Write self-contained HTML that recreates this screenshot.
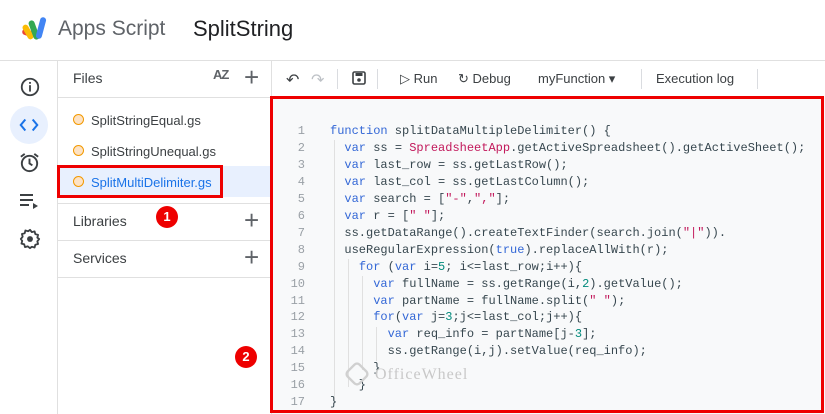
<!DOCTYPE html>
<html><head><meta charset="utf-8"><style>
*{margin:0;padding:0;box-sizing:border-box}
body{width:825px;height:414px;overflow:hidden;background:#fff;font-family:"Liberation Sans",sans-serif;position:relative;color:#3c4043}
.a{position:absolute}
.code{font-family:"Liberation Mono",monospace;font-size:12px;color:#37474f;white-space:pre;line-height:16.95px}
.ln{color:#9aa0a6;text-align:right;width:20px;left:285px}
.k{color:#3367d6}.p{color:#c2185b}.n{color:#00897b}.s{color:#c2185b}
.g{position:absolute;width:1px;background:#e0e0e0}
.badge{position:absolute;width:22px;height:22px;border-radius:50%;background:#e00;color:#fff;font-weight:bold;font-size:13px;text-align:center;line-height:22px}
.hl{position:absolute;height:1px;background:#e0e0e0}
</style></head><body>
<svg class="a" style="left:20px;top:16px" width="30" height="26" viewBox="0 0 30 26">
<rect x="2" y="14" width="12" height="6" rx="3" fill="#ea4335" transform="rotate(20 8 17)"/>
<rect x="5" y="8" width="6" height="16" rx="3" fill="#fbbc04" transform="rotate(-30 8 16)"/>
<rect x="11" y="4" width="6" height="20" rx="3" fill="#34a853" transform="rotate(-20 14 14)"/>
<rect x="18" y="1" width="6" height="22" rx="3" fill="#4285f4" transform="rotate(15 21 12)"/>
</svg>
<div class="a" style="left:58px;top:17px;font-size:21px;color:#5f6368">Apps Script</div>
<div class="a" style="left:193px;top:16px;font-size:22px;color:#202124">SplitString</div>
<div class="hl" style="left:0;top:60px;width:825px"></div>
<div class="a" style="left:57px;top:60px;width:1px;height:354px;background:#e0e0e0"></div>
<svg class="a" style="left:19px;top:76px" width="22" height="22" viewBox="0 0 24 24"><circle cx="12" cy="12" r="9" fill="none" stroke="#3c4043" stroke-width="2"/><rect x="11" y="10" width="2" height="7" fill="#3c4043"/><rect x="11" y="6.5" width="2" height="2" fill="#3c4043"/></svg>
<div class="a" style="left:10px;top:106px;width:38px;height:38px;border-radius:50%;background:#e8f0fe"></div>
<svg class="a" style="left:18px;top:115px" width="22" height="20" viewBox="0 0 24 20"><path d="M8 4 L3 10 L8 16 M16 4 L21 10 L16 16" fill="none" stroke="#1a73e8" stroke-width="2.2"/></svg>
<svg class="a" style="left:18px;top:151px" width="23" height="23" viewBox="0 0 24 24"><circle cx="12" cy="13" r="8" fill="none" stroke="#3c4043" stroke-width="2"/><path d="M12 8v5l3 2M3 6l4-3M21 6l-4-3" fill="none" stroke="#3c4043" stroke-width="2"/></svg>
<svg class="a" style="left:18px;top:192px" width="22" height="18" viewBox="0 0 22 18"><path d="M2 3h13M2 8h13M2 13h9" stroke="#3c4043" stroke-width="2"/><path d="M15 11l5 3-5 3z" fill="#3c4043"/></svg>
<svg class="a" style="left:19px;top:228px" width="22" height="22" viewBox="0 0 24 24"><path d="M12 2l2 2.5 3-.8.8 3 3 .8-.8 3L22 12l-2 2.5.8 3-3 .8-.8 3-3-.8L12 22l-2.5-2-3 .8-.8-3-3-.8.8-3L2 12l2-2.5-.8-3 3-.8.8-3 3 .8z" fill="none" stroke="#3c4043" stroke-width="2" stroke-linejoin="round"/><circle cx="12" cy="12" r="3.2" fill="#3c4043"/></svg>
<div class="a" style="left:271px;top:60px;width:1px;height:354px;background:#e0e0e0"></div>
<div class="a" style="left:73px;top:70px;font-size:14px;color:#3c4043">Files</div>
<div class="a" style="left:213px;top:67px;font-size:13px;font-weight:bold;color:#5f6368;letter-spacing:-1px">AZ</div>
<div class="a" style="left:244px;top:62px;font-size:26px;color:#5f6368;font-weight:300">+</div>
<div class="hl" style="left:58px;top:97px;width:213px"></div>
<div class="a" style="left:58px;top:166px;width:213px;height:31px;background:#e8f0fe"></div>
<div class="a" style="left:73px;top:114px;width:11px;height:11px;border-radius:50%;border:1.5px solid #f29900;background:#fde2c4"></div>
<div class="a" style="left:73px;top:145px;width:11px;height:11px;border-radius:50%;border:1.5px solid #f29900;background:#fde2c4"></div>
<div class="a" style="left:73px;top:176px;width:11px;height:11px;border-radius:50%;border:1.5px solid #f29900;background:#fde2c4"></div>
<div class="a" style="left:91px;top:113px;font-size:13px">SplitStringEqual.gs</div>
<div class="a" style="left:91px;top:144px;font-size:13px">SplitStringUnequal.gs</div>
<div class="a" style="left:91px;top:175px;font-size:13px;color:#1a73e8">SplitMultiDelimiter.gs</div>
<div class="a" style="left:57px;top:165px;width:166px;height:33px;border:3px solid #e00"></div>
<div class="hl" style="left:58px;top:203px;width:213px"></div>
<div class="a" style="left:73px;top:213px;font-size:14px">Libraries</div>
<div class="a" style="left:244px;top:205px;font-size:26px;color:#5f6368;font-weight:300">+</div>
<div class="badge" style="left:156px;top:206px">1</div>
<div class="hl" style="left:58px;top:240px;width:213px"></div>
<div class="a" style="left:73px;top:250px;font-size:14px">Services</div>
<div class="a" style="left:244px;top:242px;font-size:26px;color:#5f6368;font-weight:300">+</div>
<div class="hl" style="left:58px;top:277px;width:213px"></div>
<div class="badge" style="left:235px;top:346px">2</div>
<div class="a" style="left:286px;top:70px;font-size:16px;color:#3c4043">↶</div>
<div class="a" style="left:311px;top:70px;font-size:16px;color:#bdc1c6">↷</div>
<div class="a" style="left:337px;top:69px;width:1px;height:20px;background:#dadce0"></div>
<svg class="a" style="left:352px;top:71px" width="14" height="14" viewBox="0 0 14 14"><rect x="1" y="1" width="12" height="12" rx="1.5" fill="none" stroke="#3c4043" stroke-width="1.6"/><rect x="3.5" y="2" width="7" height="3" fill="#3c4043"/><circle cx="7" cy="9" r="1.8" fill="#3c4043"/></svg>
<div class="a" style="left:377px;top:69px;width:1px;height:20px;background:#dadce0"></div>
<div class="a" style="left:400px;top:71px;font-size:13px;color:#3c4043">▷ Run</div>
<div class="a" style="left:458px;top:71px;font-size:13px;color:#3c4043">↻ Debug</div>
<div class="a" style="left:538px;top:71px;font-size:13px;color:#3c4043">myFunction ▾</div>
<div class="a" style="left:641px;top:69px;width:1px;height:20px;background:#dadce0"></div>
<div class="a" style="left:656px;top:71px;font-size:13px;color:#3c4043">Execution log</div>
<div class="a" style="left:757px;top:69px;width:1px;height:20px;background:#dadce0"></div>
<div class="a" style="left:272px;top:97px;width:553px;height:317px;background:#f8f9fa"></div>
<div class="g" style="left:334px;top:140px;height:264px"></div>
<div class="g" style="left:348px;top:259px;height:128px"></div>
<div class="g" style="left:362px;top:276px;height:94px"></div>
<div class="g" style="left:376px;top:327px;height:34px"></div>
<div class="a code ln" style="top:123px">1
2
3
4
5
6
7
8
9
10
11
12
13
14
15
16
17</div>
<div class="a code" style="left:330px;top:123px"><span class="k">function</span> splitDataMultipleDelimiter() {
  <span class="k">var</span> ss = <span class="p">SpreadsheetApp</span>.getActiveSpreadsheet().getActiveSheet();
  <span class="k">var</span> last_row = ss.getLastRow();
  <span class="k">var</span> last_col = ss.getLastColumn();
  <span class="k">var</span> search = [<span class="s">"-"</span>,<span class="s">","</span>];
  <span class="k">var</span> r = [<span class="s">" "</span>];
  ss.getDataRange().createTextFinder(search.join(<span class="s">"|"</span>)).
  useRegularExpression(<span class="k">true</span>).replaceAllWith(r);
    <span class="k">for</span> (<span class="k">var</span> i=<span class="n">5</span>; i&lt;=last_row;i++){
      <span class="k">var</span> fullName = ss.getRange(i,<span class="n">2</span>).getValue();
      <span class="k">var</span> partName = fullName.split(<span class="s">" "</span>);
      <span class="k">for</span>(<span class="k">var</span> j=<span class="n">3</span>;j&lt;=last_col;j++){
        <span class="k">var</span> req_info = partName[j-<span class="n">3</span>];
        ss.getRange(i,j).setValue(req_info);
      }
    }
}</div>
<div class="a" style="left:375px;top:366px;font-family:'Liberation Serif',serif;font-size:16px;color:#c8c8c8;letter-spacing:1px">OfficeWheel</div>
<div class="a" style="left:345px;top:362px;width:24px;height:24px;border:3px solid #d0d0d0;border-radius:6px;transform:rotate(45deg) scale(.8)"></div>
<div class="a" style="left:270px;top:96px;width:554px;height:317px;border:3px solid #e00"></div>
</body></html>
